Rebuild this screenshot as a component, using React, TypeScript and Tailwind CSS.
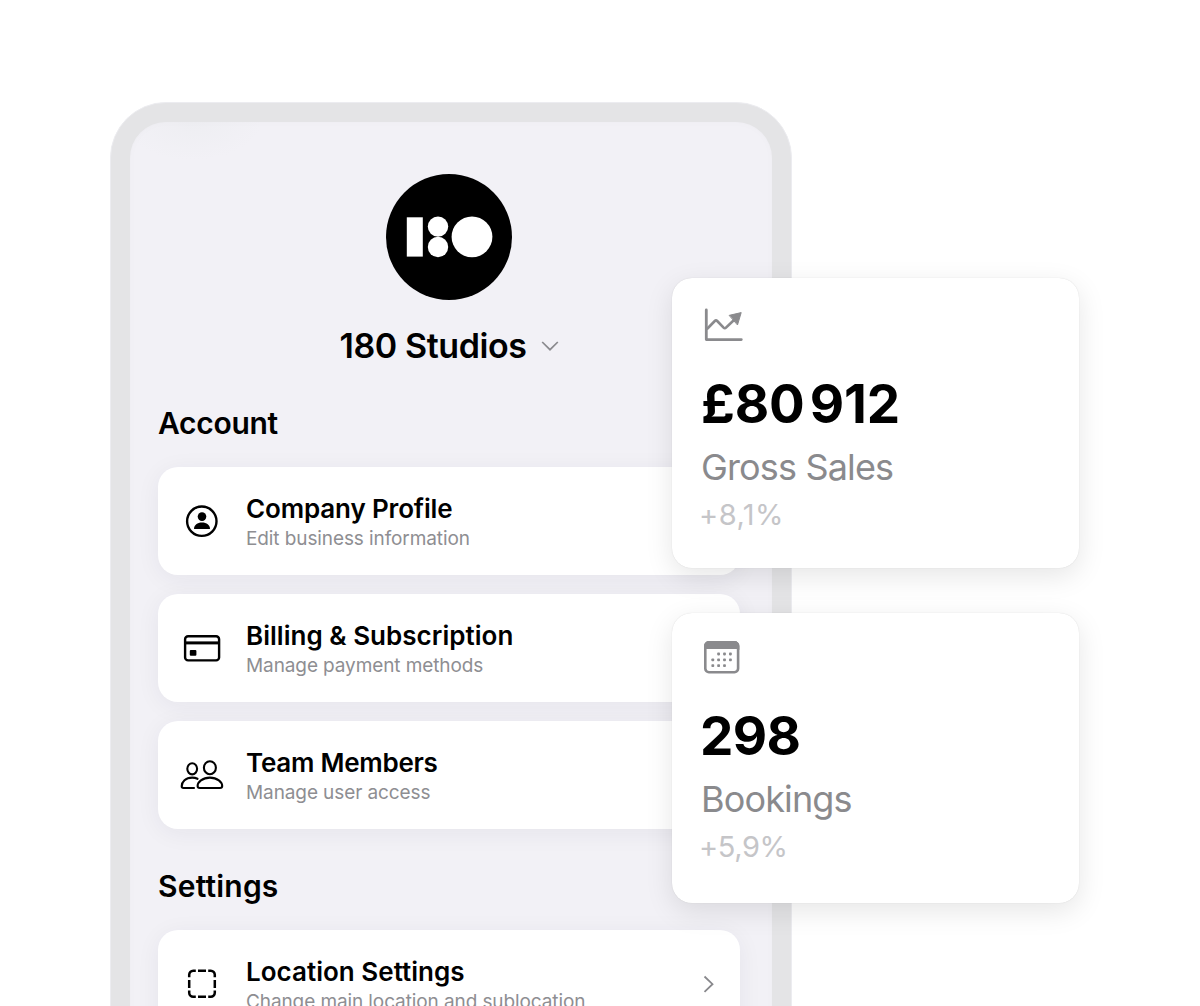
import type { ReactNode } from 'react'

function Logo() {
  return (
    <svg width="126" height="126" viewBox="0 0 126 126" fill="#fff">
      <circle cx="63" cy="63" r="63" fill="#000" />
      <rect x="20.8" y="43.3" width="16" height="39.3" />
      <circle cx="52" cy="52.6" r="10.2" />
      <circle cx="52" cy="73" r="10.2" />
      <circle cx="86" cy="62.8" r="20.4" />
    </svg>
  )
}

function ProfileIcon() {
  return (
    <svg width="44" height="44" viewBox="0 0 44 44">
      <circle cx="21.8" cy="22.2" r="14.7" fill="none" stroke="#000" strokeWidth="2.4" />
      <circle cx="22" cy="17.6" r="4.3" />
      <path d="M14 30c0-3.9 3.4-6.4 8-6.4s8 2.5 8 6.4z" />
    </svg>
  )
}

function CardIcon() {
  return (
    <svg width="44" height="44" viewBox="0 0 44 44">
      <rect x="5.1" y="10.2" width="34" height="24.2" rx="3" fill="none" stroke="#000" strokeWidth="2.4" />
      <rect x="5" y="15.4" width="34" height="3" />
      <rect x="9.8" y="24" width="6.6" height="5.8" rx="1" />
    </svg>
  )
}

function TeamIcon() {
  return (
    <svg width="44" height="44" viewBox="0 0 44 44" fill="none" stroke="#000" strokeWidth="2.1" strokeLinecap="round" strokeLinejoin="round">
      <ellipse cx="12.2" cy="15.8" rx="4.9" ry="5.6" />
      <ellipse cx="29.9" cy="14.7" rx="6" ry="6.5" />
      <path d="M17.5 25.8C16 25 14.2 24.6 12.2 24.6 5.6 24.6 1.7 29 1.7 33.300c0 1.1.8 1.700 1.800 1.700H14" />
      <path d="M29.9 24.6c-7.5 0-12.3 4.5-12.3 8.400 0 1.300.8 2 2.200 2h20.200c1.400 0 2.200-.7 2.200-2 0-3.900-4.800-8.400-12.300-8.400z" />
    </svg>
  )
}

function DashedSquareIcon() {
  return (
    <svg width="44" height="44" viewBox="0 0 44 44" fill="none" stroke="#000" strokeWidth="2.5">
      <path d="M9.2 15.2v-2.400a4 4 0 0 1 4-4h2.600M28.200 8.800h2.600a4 4 0 0 1 4 4v2.400M34.800 28.600v2.200a4 4 0 0 1-4 4h-2.600M15.800 34.800h-2.600a4 4 0 0 1-4-4v-2.200" />
      <path d="M18 8.800h8M18 34.800h8M9.200 18v8M34.800 18v8" />
    </svg>
  )
}

function ChartIcon() {
  return (
    <svg className="mt-px" width="40" height="36" viewBox="0 0 40 36" fill="none" stroke="#8a8a8d" strokeWidth="2.8" strokeLinecap="round" strokeLinejoin="round">
      <path d="M2.3 3v29.600h35" />
      <path d="M3.5 21.500l7.300-7.500q1.200-1.200 2.400 0l6.400 6.700q1.200 1.200 2.400 0L29.500 13.500" strokeWidth="2.6" />
      <path d="M25.5 8.300L37.200 5.600 33.600 17.600z" fill="#8a8a8d" strokeWidth="1" />
    </svg>
  )
}

const dots = [
  [14.6, 13], [20.5, 13], [26.4, 13],
  [8.8, 18.9], [14.6, 18.9], [20.5, 18.9], [26.4, 18.9],
  [8.8, 24.6], [14.6, 24.6], [20.5, 24.6],
]

function CalendarIcon() {
  return (
    <svg className="ml-[0.3px] mt-[2.7px]" width="36" height="34" viewBox="0 0 36 34" fill="#8a8a8d">
      <rect x="1.3" y="1.3" width="32.8" height="29.9" rx="3.6" fill="none" stroke="#8a8a8d" strokeWidth="2.6" />
      <path d="M0 5a5 5 0 0 1 5-5h25.400a5 5 0 0 1 5 5v4a2 2 0 0 0-2-1H2a2 2 0 0 0-2 1z" />
      {dots.map(([x, y]) => (
        <rect key={`${x}-${y}`} x={x - 1.4} y={y - 1.4} width="2.8" height="2.8" rx="0.8" />
      ))}
    </svg>
  )
}

type RowProps = { icon: ReactNode; title: string; text: string; titleClass: string }

function Row({ icon, title, text, titleClass }: RowProps) {
  return (
    <div className="flex h-[108px] items-center rounded-[20px] bg-white pl-[22px] pr-6 shadow-[0_4px_24px_rgba(40,40,60,0.06)]">
      {icon}
      <div className="ml-[22px] flex-1 pt-[4px] whitespace-nowrap">
        <div className={`text-[26px] leading-[32px] font-semibold ${titleClass}`}>{title}</div>
        <div className="text-[19px] leading-[28px] tracking-[-0.1px] text-[#8e8e92]">{text}</div>
      </div>
      <svg width="14" height="20" viewBox="0 0 14 20" fill="none" stroke="#88888c" strokeWidth="1.8">
        <path d="M2.5 2.500l8 7.700-8 7.700" />
      </svg>
    </div>
  )
}

type StatProps = {
  icon: ReactNode
  value: string
  label: string
  change: string
  boxClass: string
  valueClass: string
  changeClass: string
}

function Stat({ icon, value, label, change, boxClass, valueClass, changeClass }: StatProps) {
  return (
    <div className={`h-[290px] w-[407px] rounded-[20px] bg-white pl-[29px] whitespace-nowrap shadow-[0_8px_28px_rgba(0,0,0,0.1),0_0_1px_rgba(0,0,0,0.16)] ${boxClass}`}>
      <div className="flex h-[36px] items-start pl-[3px]">{icon}</div>
      <div className={`mt-[31px] text-[53px] leading-[62px] font-bold ${valueClass}`}>{value}</div>
      <div className="mt-[10px] text-[36px] leading-[44px] tracking-[-0.85px] text-[#8a8a8d]">{label}</div>
      <div className={`-ml-[2px] mt-[8px] text-[29px] leading-[36px] text-[#c5c5c8] ${changeClass}`}>{change}</div>
    </div>
  )
}

export default function App() {
  return (
    <div className="relative h-[1006px] w-[1200px] overflow-hidden bg-white pl-[110px] pt-[102px] font-['Inter',sans-serif] text-black">
      <div className="h-[1000px] w-[682px] rounded-[56px] border border-[#ececf0] bg-[#e4e4e6] p-[19px]">
        <div className="h-full overflow-hidden rounded-t-[36px] bg-[#f2f1f6] bg-[radial-gradient(70px_38px_at_62px_0px,#eeeef2,#f2f1f6)] pl-[28px] pr-[32px] pt-[52px] shadow-[inset_0_0_8px_rgba(0,0,0,0.02)]">
          <div className="flex flex-col items-center">
            <Logo />
            <div className="mt-[24px] flex items-center">
              <h1 className="text-[34px] leading-[44px] font-semibold tracking-[-0.4px]">180 Studios</h1>
              <svg className="ml-[14px]" width="18" height="12" viewBox="0 0 18 12" fill="none" stroke="#8a8a8e" strokeWidth="1.7">
                <path d="M1.2 2l7.800 7.700L16.800 2" />
              </svg>
            </div>
          </div>

          <h2 className="mt-[35px] text-[30px] leading-[40px] font-semibold tracking-[-0.3px]">Account</h2>
          <div className="mt-[24px] flex flex-col gap-[19px]">
            <Row icon={<ProfileIcon />} title="Company Profile" text="Edit business information" titleClass="tracking-[-0.15px]" />
            <Row icon={<CardIcon />} title="Billing &amp; Subscription" text="Manage payment methods" titleClass="tracking-[0.03px]" />
            <Row icon={<TeamIcon />} title="Team Members" text="Manage user access" titleClass="tracking-[-0.25px]" />
          </div>

          <h2 className="mt-[37px] text-[30px] leading-[40px] font-semibold tracking-[0.2px]">Settings</h2>
          <div className="mt-[24px]">
            <Row icon={<DashedSquareIcon />} title="Location Settings" text="Change main location and sublocation" titleClass="tracking-[0.02px]" />
          </div>
        </div>
      </div>

      {/* stat cards float over the phone's right edge */}
      <div className="absolute left-[672px] top-[278px] flex flex-col gap-[45px]">
        <Stat icon={<ChartIcon />} value="£80 912" label="Gross Sales" change="+8,1%" boxClass="pt-[28px]" valueClass="tracking-[-0.2px] [word-spacing:-7px]" changeClass="tracking-[0.5px]" />
        <Stat icon={<CalendarIcon />} value="298" label="Bookings" change="+5,9%" boxClass="pt-[25px]" valueClass="-ml-px tracking-[-0.6px]" changeClass="tracking-[-0.4px]" />
      </div>
    </div>
  )
}
